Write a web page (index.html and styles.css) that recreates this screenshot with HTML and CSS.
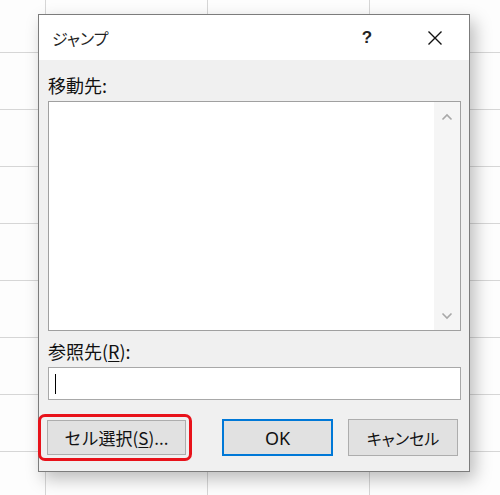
FILE: index.html
```html
<!DOCTYPE html>
<html lang="ja">
<head>
<meta charset="utf-8">
<title>ジャンプ</title>
<link rel="stylesheet" href="styles.css">
</head>
<body>
<div class="sheet">
  <div class="dialog">
    <div class="titlebar">
      <span class="title">ジャンプ</span>
      <span class="help">?</span>
      <span class="close">
        <svg width="16" height="16" viewBox="0 0 16 16"><path d="M1.5 1.5 L14.5 14.5 M14.5 1.5 L1.5 14.5" stroke="#111" stroke-width="1.4" fill="none"/></svg>
      </span>
    </div>
    <div class="body">
      <div class="label first">移動先:</div>
      <div class="listbox">
        <div class="list-area"></div>
        <div class="scrollbar">
          <svg class="arrow" width="12" height="8" viewBox="0 0 12 8"><path d="M1.5 6.5 L6 2 L10.5 6.5" stroke="#a8a8a8" stroke-width="1.6" fill="none"/></svg>
          <svg class="arrow" width="12" height="8" viewBox="0 0 12 8"><path d="M1.5 1.5 L6 6 L10.5 1.5" stroke="#a8a8a8" stroke-width="1.6" fill="none"/></svg>
        </div>
      </div>
      <div class="label second">参照先(<u>R</u>):</div>
      <div class="input"><span class="caret"></span></div>
      <div class="buttons">
        <div class="highlight"></div>
        <div class="btn btn-cell">セル選択(<u>S</u>)...</div>
        <div class="btn btn-ok">OK</div>
        <div class="btn btn-cancel">キャンセル</div>
      </div>
    </div>
  </div>
</div>
</body>
</html>
```
FILE: styles.css
```css
html, body {
  margin: 0;
  padding: 0;
}
body {
  width: 500px;
  height: 495px;
  overflow: hidden;
  font-family: "Noto Sans CJK JP", "Noto Sans", sans-serif;
  color: #1a1a1a;
}
.sheet {
  position: relative;
  width: 500px;
  height: 495px;
  background-color: #fdfdfd;
  background-image:
    linear-gradient(to right, #d6d6d6 1px, transparent 1px),
    linear-gradient(to bottom, #d6d6d6 1px, transparent 1px);
  background-size: 162px 57px, 162px 57px;
  background-position: 45px 0, 0 52px;
}
.dialog {
  position: absolute;
  left: 38px;
  top: 14px;
  width: 430px;
  height: 456px;
  border: 1px solid #7c7c7c;
  background: #f0f0f0;
  box-shadow: 5px 7px 16px rgba(0,0,0,0.26);
  display: flex;
  flex-direction: column;
}
.titlebar {
  height: 45px;
  background: #ffffff;
  display: flex;
  align-items: center;
  font-feature-settings: "palt";
}
.title {
  margin-left: 13px;
  font-size: 16px;
  color: #222;
  flex: 1;
}
.help {
  font-size: 17px;
  font-weight: bold;
  font-family: "Liberation Sans", sans-serif;
  color: #222;
  width: 20px;
  text-align: center;
  margin-right: 50px;
}
.close {
  width: 16px;
  height: 16px;
  margin-right: 26px;
  display: flex;
}
.body {
  flex: 1;
  padding: 0 8px 0 9px;
  display: flex;
  flex-direction: column;
}
.label {
  font-size: 18px;
  line-height: 22px;
  color: #111;
}
.label.first {
  margin-top: 14px;
  height: 27px;
}
.label.second {
  margin-top: 9px;
  height: 27px;
}
.label u {
  text-underline-offset: 2px;
}
.listbox {
  height: 228px;
  border: 1px solid #a0a0a0;
  background: #ffffff;
  display: flex;
}
.list-area {
  flex: 1;
}
.scrollbar {
  width: 26px;
  background: #f5f5f5;
  display: flex;
  flex-direction: column;
  justify-content: space-between;
  align-items: center;
  padding: 11px 0 10px;
}
.input {
  height: 31px;
  border: 1px solid #a8a8a8;
  background: #ffffff;
  display: flex;
  align-items: center;
  padding-left: 6px;
}
.caret {
  width: 1px;
  height: 20px;
  background: #000;
}
.buttons {
  position: relative;
  margin-top: 20px;
  display: flex;
  align-items: flex-start;
}
.btn {
  height: 35px;
  box-sizing: border-box;
  border: 1px solid #adadad;
  background: #e1e1e1;
  display: flex;
  align-items: center;
  justify-content: center;
  font-size: 17px;
  color: #111;
}
.btn-cell {
  width: 139px;
  margin-left: -1px;
}
.btn-ok {
  width: 111px;
  height: 37px;
  margin-top: -1px;
  margin-left: 36px;
  border: 2px solid #0078d7;
  font-family: "Noto Sans", sans-serif;
  font-size: 18px;
}
.btn-cancel {
  width: 110px;
  height: 37px;
  margin-top: -1px;
  margin-left: 15px;
  font-size: 16px;
  font-feature-settings: "palt";
}
.btn u {
  text-underline-offset: 2px;
}
.highlight {
  position: absolute;
  left: -10px;
  top: -6px;
  width: 154px;
  height: 47px;
  box-sizing: border-box;
  border: 3px solid #e8121a;
  border-radius: 7px;
  pointer-events: none;
}
```
